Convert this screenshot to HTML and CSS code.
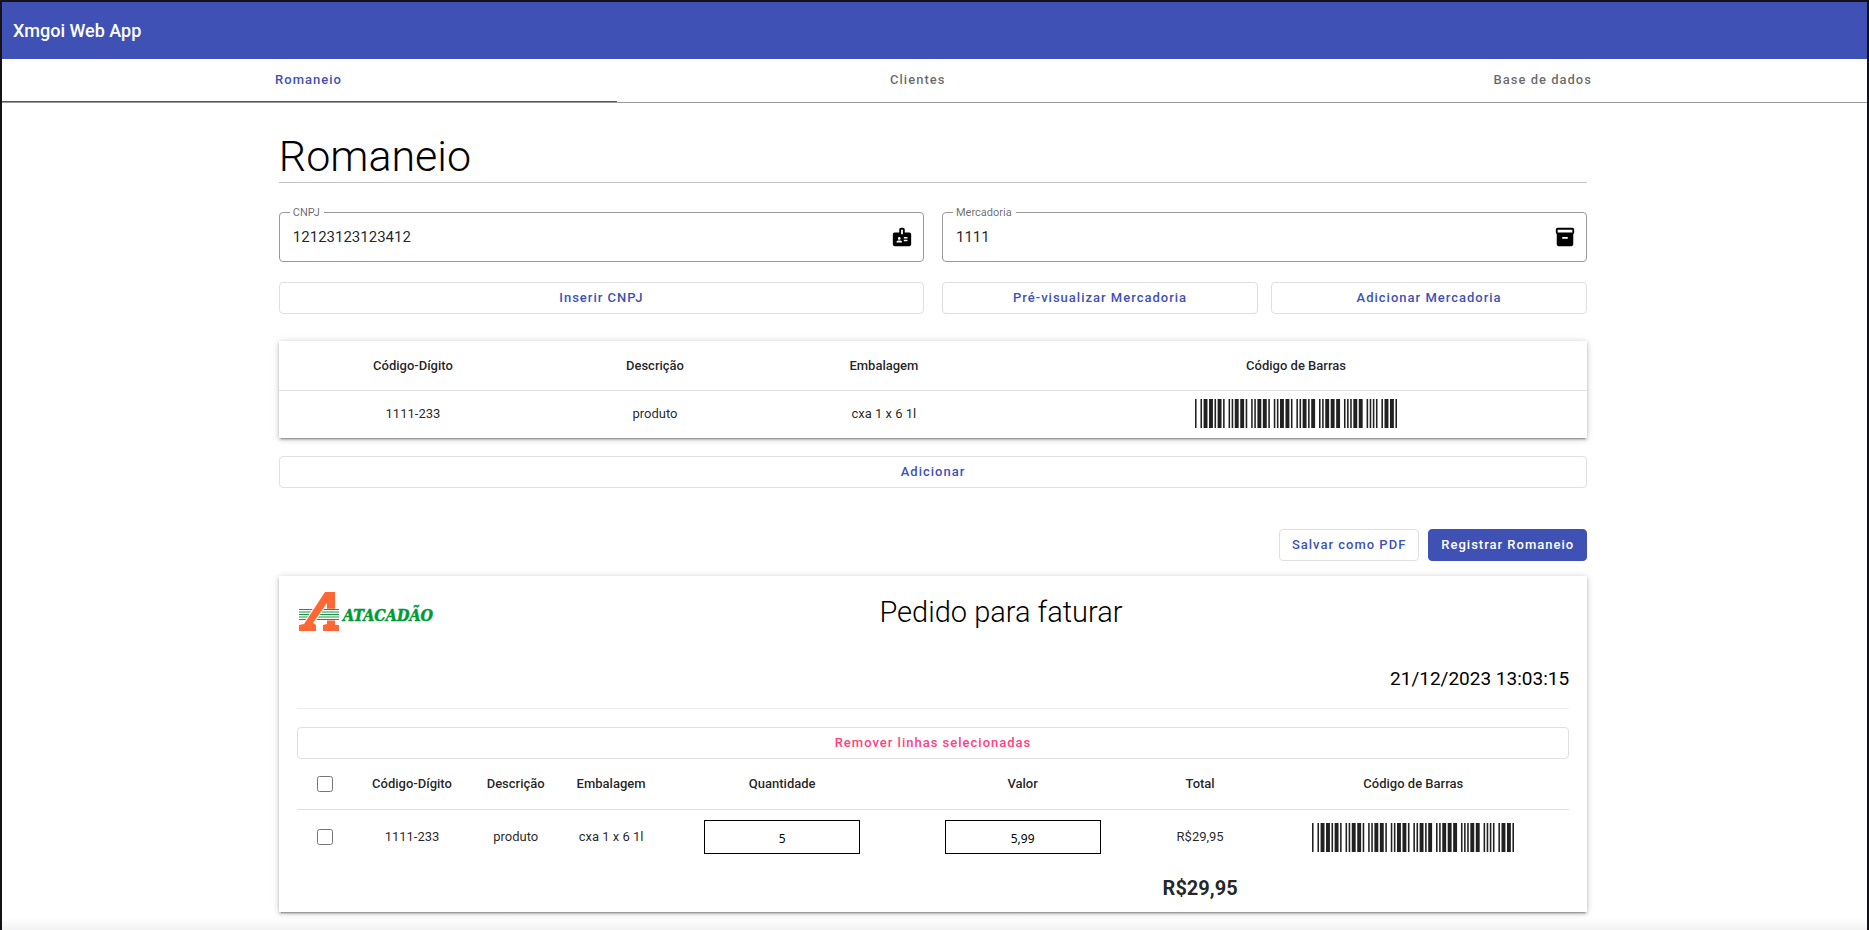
FILE: index.html
```html
<!DOCTYPE html>
<html lang="pt-BR">
<head>
<meta charset="utf-8">
<title>Xmgoi Web App</title>
<link rel="stylesheet" href="styles.css">
</head>
<body>
<svg class="defs" aria-hidden="true">
  <defs>
    <path id="c39-s" d="M0 0h2v30h-2zM7 0h2v30h-2zM11 0h5v30h-5zM18 0h5v30h-5zM25 0h2v30h-2z"/>
    <path id="c39-1" d="M0 0h5v30h-5zM7 0h2v30h-2zM14 0h2v30h-2zM18 0h2v30h-2zM22 0h5v30h-5z"/>
    <path id="c39-2" d="M0 0h2v30h-2zM4 0h5v30h-5zM14 0h2v30h-2zM18 0h2v30h-2zM22 0h5v30h-5z"/>
    <path id="c39-3" d="M0 0h5v30h-5zM7 0h5v30h-5zM17 0h2v30h-2zM21 0h2v30h-2zM25 0h2v30h-2z"/>
    <g id="code-1111233">
      <use href="#c39-s" x="0"/><use href="#c39-1" x="29"/><use href="#c39-1" x="58"/>
      <use href="#c39-1" x="87"/><use href="#c39-1" x="116"/><use href="#c39-2" x="145"/>
      <use href="#c39-3" x="174"/><use href="#c39-3" x="203"/><use href="#c39-s" x="232"/>
    </g>
  </defs>
</svg>
<header class="toolbar">Xmgoi Web App</header>
<nav class="tabs">
  <a class="tab tab-active" href="#romaneio">Romaneio</a>
  <a class="tab" href="#clientes">Clientes</a>
  <a class="tab" href="#base">Base de dados</a>
</nav>
<main class="page">
  <div class="content">
    <h1 class="title">Romaneio</h1>

    <form class="entry">
      <div class="entry-col">
        <fieldset class="field">
          <legend class="field-legend"><label for="cnpj">CNPJ</label></legend>
          <input class="field-input" id="cnpj" type="text" value="12123123123412">
          <svg class="field-icon" viewBox="0 0 24 24" aria-hidden="true"><path fill-rule="evenodd" d="M20 7h-5V4c0-1.1-.9-2-2-2h-2c-1.1 0-2 .9-2 2v3H4c-1.1 0-2 .9-2 2v11c0 1.100.9 2 2 2h16c1.100 0 2-.9 2-2V9c0-1.100-.9-2-2-2zM9 12c.83 0 1.500.67 1.500 1.500S9.830 15 9 15s-1.500-.67-1.500-1.500S8.170 12 9 12zm3 6H6v-.43c0-.6.36-1.150.92-1.390C7.560 15.900 8.260 15.750 9 15.750s1.440.15 2.080.43c.55.24.92.78.92 1.390V18zm1-9h-2V4h2v5zm5 7.500h-4V15h4v1.500zm0-3h-4V12h4v1.500z"/></svg>
        </fieldset>
        <button class="btn" type="button">Inserir CNPJ</button>
      </div>
      <div class="entry-col">
        <fieldset class="field">
          <legend class="field-legend"><label for="mercadoria">Mercadoria</label></legend>
          <input class="field-input" id="mercadoria" type="text" value="1111">
          <svg class="field-icon" viewBox="0 0 24 24" aria-hidden="true"><path fill-rule="evenodd" d="M20 2H4c-1 0-2 .9-2 2v3.010c0 .72.43 1.340 1 1.690V20c0 1.100 1.100 2 2 2h14c.9 0 2-.9 2-2V8.700c.57-.35 1-.97 1-1.690V4c0-1.100-1-2-2-2zm-5 12H9v-2h6v2zm5-7H4V4h16v3z"/></svg>
        </fieldset>
        <div class="pair">
          <button class="btn" type="button">Pré-visualizar Mercadoria</button>
          <button class="btn" type="button">Adicionar Mercadoria</button>
        </div>
      </div>
    </form>

    <table class="grid preview raised">
      <colgroup><col class="p-code"><col class="p-desc"><col class="p-pack"><col class="p-bars"></colgroup>
      <thead><tr><th>Código-Dígito</th><th>Descrição</th><th>Embalagem</th><th>Código de Barras</th></tr></thead>
      <tbody><tr>
        <td>1111-233</td><td>produto</td><td>cxa 1 x 6 1l</td>
        <td><svg class="barcode" viewBox="0 0 259 30" preserveAspectRatio="none" role="img" aria-label="1111233"><use href="#code-1111233"/></svg></td>
      </tr></tbody>
    </table>
    <button class="btn" type="button">Adicionar</button>

    <div class="actions">
      <button class="btn btn-fit" type="button">Salvar como PDF</button>
      <button class="btn btn-fit btn-primary" type="button">Registrar Romaneio</button>
    </div>

    <section class="order raised">
      <div class="order-head">
        <svg class="logo" viewBox="0 0 136 42" role="img" aria-label="Atacadão">
          <path class="logo-stem" d="M30 1H38V34H42V40H26V34L30 33z"/>
          <path class="logo-band" d="M2 17.500H42V29.500H2z"/>
          <path class="logo-lines" d="M2 18.500h40M2 21h40M2 23.500h40M2 26h40M2 28.500h40"/>
          <path class="logo-leg logo-halo" d="M28 1H36L30 12L16 32L19 34V40H2V34L7 33z"/>
          <path class="logo-leg" d="M28 1H38V17.500H30V12L16 32L19 34V40H2V34L7 33z"/>
          <text class="logo-text" x="46" y="30">ATACADÃO</text>
        </svg>
        <h2 class="order-title">Pedido para faturar</h2>
      </div>
      <time class="order-date" datetime="2023-12-21T13:03:15">21/12/2023 13:03:15</time>
      <button class="btn btn-danger" type="button">Remover linhas selecionadas</button>
      <table class="grid items">
        <colgroup><col class="i-check"><col class="i-code"><col class="i-desc"><col class="i-pack"><col class="i-num"><col class="i-num"><col class="i-total"><col class="i-bars"></colgroup>
        <thead><tr>
          <th><input class="check" type="checkbox" aria-label="Selecionar todas as linhas"></th>
          <th>Código-Dígito</th><th>Descrição</th><th>Embalagem</th><th>Quantidade</th><th>Valor</th><th>Total</th><th>Código de Barras</th>
        </tr></thead>
        <tbody><tr>
          <td><input class="check" type="checkbox" aria-label="Selecionar linha 1111-233"></td>
          <td>1111-233</td><td>produto</td><td>cxa 1 x 6 1l</td>
          <td><input class="cell-input" type="text" value="5" aria-label="Quantidade"></td>
          <td><input class="cell-input" type="text" value="5,99" aria-label="Valor"></td>
          <td>R$29,95</td>
          <td><svg class="barcode" viewBox="0 0 259 30" preserveAspectRatio="none" role="img" aria-label="1111233"><use href="#code-1111233"/></svg></td>
        </tr></tbody>
        <tfoot><tr><td colspan="6"></td><td class="sum">R$29,95</td><td></td></tr></tfoot>
      </table>
    </section>
  </div>
  <div class="edge"></div>
</main>
</body>
</html>
```
FILE: styles.css
```css
* { box-sizing: border-box; }

html { overflow: hidden; }

body {
  margin: 0;
  height: 100vh;
  overflow: hidden;
  display: flex;
  flex-direction: column;
  border: 2px solid #141118;
  border-bottom: 0;
  background: #fff;
  color: rgba(0, 0, 0, 0.87);
  font: 13px/20px Roboto, sans-serif;
}

.defs { position: absolute; width: 0; height: 0; }

.toolbar {
  flex: none;
  padding: 0 11px;
  background: #3f51b5;
  color: #fff;
  font-size: 18px;
  font-weight: 500;
  line-height: 57px;
}

.tabs {
  flex: none;
  display: flex;
  border-bottom: 1px solid #999;
}

.tab {
  flex: 1 1 auto;
  height: 43px;
  padding-right: 2px;
  border-bottom: 1px solid transparent;
  color: rgba(0, 0, 0, 0.6);
  font-weight: 500;
  letter-spacing: 1px;
  line-height: 42px;
  text-align: center;
  text-decoration: none;
}

.tab-active { border-color: #3f51b5; color: #3f51b5; }

.page {
  flex: 1;
  min-height: 0;
  display: flex;
  flex-direction: column;
  justify-content: space-between;
  padding-right: 3px;
}

.content {
  width: 70vw;
  margin: 0 auto;
  padding-top: 28px;
}

.title {
  margin: 0;
  border-bottom: 1px solid #c4c4c4;
  color: #000;
  font-size: 43px;
  font-weight: 300;
  line-height: 51px;
}

.entry {
  display: grid;
  grid-template-columns: 1fr 1fr;
  gap: 18px;
  margin-top: 23px;
}

.entry-col { display: grid; gap: 20px; }

.field {
  display: flex;
  align-items: center;
  min-width: 0;
  height: 56px;
  margin: 0;
  padding: 0 10px 7px 10px;
  border: 1px solid #999;
  border-radius: 4px;
}

.field-legend {
  padding: 0 4px 0 3px;
  color: rgba(0, 0, 0, 0.6);
  font-size: 11px;
  line-height: 13px;
}

.field-input {
  flex: 1;
  min-width: 0;
  padding: 0 3px;
  border: 0;
  outline: 0;
  background: none;
  color: rgba(0, 0, 0, 0.87);
  font: 15px/24px Roboto, sans-serif;
}

.field-icon { width: 22px; height: 22px; fill: #000; }

.pair { display: grid; grid-template-columns: 1fr 1fr; gap: 13px; }

.btn {
  width: 100%;
  height: 32px;
  padding: 0 12px;
  border: 1px solid #e0e0e0;
  border-radius: 4px;
  background: #fff;
  color: #3f51b5;
  font: 500 13px/30px Roboto, sans-serif;
  letter-spacing: 1px;
}

.btn-fit { width: auto; }
.btn-primary { border-color: #3f51b5; background: #3f51b5; color: #fff; }
.btn-danger { color: #ff4081; }

.raised {
  background: #fff;
  box-shadow: 0 3px 1px -2px rgba(0, 0, 0, 0.2), 0 2px 2px 0 rgba(0, 0, 0, 0.14), 0 1px 5px 0 rgba(0, 0, 0, 0.12), 0 1px 8px 0 rgba(0, 0, 0, 0.12);
}

.grid {
  width: 100%;
  border-collapse: collapse;
  table-layout: fixed;
  text-align: center;
}

.grid th, .grid td { padding: 0; }
.grid th { border-bottom: 1px solid #e0e0e0; font-weight: 500; }

.preview { margin: 27px 0 18px; }
.preview th { height: 49px; padding-top: 2px; }
.preview td { height: 48px; padding-bottom: 1px; }

.p-code { width: 20.5%; }
.p-desc { width: 16.5%; }
.p-pack { width: 18.5%; }
.p-bars { width: 44.5%; }

.barcode {
  display: block;
  width: 202px;
  height: 29px;
  margin: 0 auto;
  fill: #212121;
}

.actions {
  display: flex;
  justify-content: flex-end;
  gap: 9px;
  margin-top: 41px;
}

.order { margin-top: 15px; padding: 15px 18px 1px; }
.order-head { display: flex; align-items: flex-start; }
.logo { width: 136px; height: 42px; }
.logo-stem, .logo-leg { fill: #ff6834; }
.logo-band { fill: #fff; }
.logo-lines { fill: none; stroke: #1a9440; stroke-width: 1; }
.logo-halo { stroke: #fff; stroke-width: 2; }
.logo-text {
  fill: #009a38;
  stroke: #009a38;
  stroke-width: 0.5;
  font: italic 700 16px "DejaVu Serif Condensed", "DejaVu Serif", serif;
}

.order-title {
  flex: 1;
  margin: 0;
  color: #000;
  font-size: 29px;
  font-weight: 300;
  line-height: 42px;
  text-align: center;
}

.order-date {
  display: block;
  margin: 34px 0 18px;
  padding-bottom: 17px;
  border-bottom: 1px solid #ececec;
  color: #000;
  font-size: 19px;
  line-height: 24px;
  text-align: right;
}

.items th { height: 50px; }
.items tbody td { height: 56px; }
.items tfoot td { height: 46px; }
.items .sum { font-size: 20px; font-weight: 700; }

.i-check { width: 56px; }
.i-code { width: 9.3%; }
.i-desc { width: 7%; }
.i-pack { width: 8%; }
.i-num { width: 18.9%; }
.i-total { width: 9%; }

.check {
  display: block;
  width: 16px;
  height: 16px;
  margin: 0 auto;
}

.cell-input {
  display: block;
  width: 65%;
  height: 34px;
  margin: 0 auto;
  padding: 2px 8px 0;
  border: 1px solid #000;
  background: #fff;
  color: #000;
  font: 12px/20px "Noto Sans", sans-serif;
  text-align: center;
}

.edge { height: 12px; background: linear-gradient(rgba(0, 0, 0, 0), rgba(0, 0, 0, 0.05)); margin-right: -3px; }
```
